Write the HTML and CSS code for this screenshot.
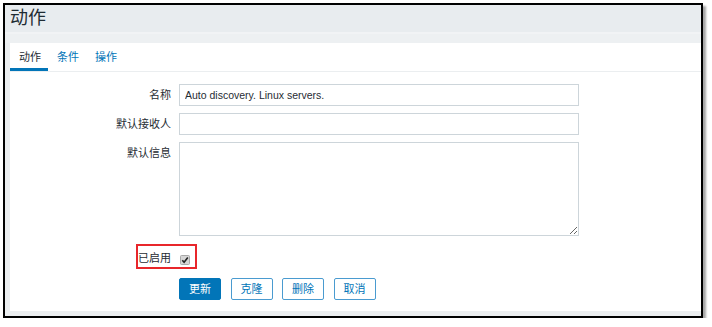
FILE: index.html
```html
<!DOCTYPE html>
<html lang="zh">
<head>
<meta charset="utf-8">
<title>动作</title>
<link rel="stylesheet" href="styles.css">
</head>
<body>
<div class="frame">
  <header class="header"><h1 class="title">动作</h1></header>
  <div class="strip"></div>
  <main class="panel">
    <ul class="tabs">
      <li class="tab active">动作</li>
      <li class="tab">条件</li>
      <li class="tab">操作</li>
    </ul>
    <form class="form">
      <div class="row">
        <label class="lbl">名称</label>
        <input class="field" type="text" value="Auto discovery. Linux servers.">
      </div>
      <div class="row">
        <label class="lbl">默认接收人</label>
        <input class="field" type="text" value="">
      </div>
      <div class="row">
        <label class="lbl">默认信息</label>
        <textarea class="area"></textarea>
      </div>
      <div class="row row-check">
        <span class="mark"></span>
        <label class="lbl">已启用</label>
        <span class="check">
          <svg width="10" height="10" viewBox="0 0 10 10">
            <rect x="0.5" y="0.5" width="9" height="9" rx="1" fill="#d6d6d6" stroke="#a9a9a9"/>
            <path d="M2.3 5.2 L4.1 7.2 L7.8 2.4" fill="none" stroke="#222" stroke-width="1.6"/>
          </svg>
        </span>
      </div>
      <div class="row row-btns">
        <span></span>
        <div class="btns">
          <button type="button" class="btn primary">更新</button>
          <button type="button" class="btn">克隆</button>
          <button type="button" class="btn">删除</button>
          <button type="button" class="btn">取消</button>
        </div>
      </div>
    </form>
  </main>
</div>
</body>
</html>
```
FILE: styles.css
```css
* { box-sizing: border-box; }
html, body { margin: 0; padding: 0; background: #ffffff; }
body {
  font-family: "Liberation Sans", "Noto Sans CJK SC", sans-serif;
  font-size: 11px;
  color: #1f2c33;
}
.frame {
  margin: 3px 0 0 3px;
  width: 700px;
  height: 315px;
  border: 2px solid #000;
  background: #ebeef0;
  box-shadow: 3px 3px 2px rgba(0,0,0,0.35);
  overflow: hidden;
}
.header {
  height: 27px;
  padding: 4px 0 0 5px;
  background: #e8ecef;
}
.title {
  margin: 0;
  font-size: 18px;
  line-height: 18px;
  font-weight: normal;
  color: #1f2c33;
}
.strip {
  height: 11px;
  background: #edf0f2;
  border-top: 2px solid #f1f3f5;
}
.panel {
  margin-left: 5px;
  height: 268px;
  background: #fff;
}
.tabs {
  display: flex;
  margin: 0;
  padding: 0;
  list-style: none;
  border-bottom: 1px solid #ebeef0;
}
.tab {
  padding: 7px 7px 4px 9px;
  line-height: 14px;
  font-size: 11px;
  color: #0275b8;
  border-bottom: 3px solid transparent;
}
.tab.active {
  color: #1f2c33;
  border-bottom-color: #0275b8;
}
.form {
  margin: 0;
  padding-top: 12px;
  display: flex;
  flex-direction: column;
  gap: 7px;
}
.row {
  position: relative;
  display: grid;
  grid-template-columns: 161px 400px;
  column-gap: 8px;
}
.lbl {
  text-align: right;
  line-height: 22px;
  font-size: 11px;
}
.field {
  height: 22px;
  border: 1px solid #cdd5da;
  padding: 0 5px;
  font-family: "Liberation Sans", sans-serif;
  font-size: 10.5px;
  color: #1f2c33;
  background: #fff;
  outline: none;
}
.area {
  height: 94px;
  border: 1px solid #cdd5da;
  padding: 3px 5px;
  background: #fff;
  font-family: "Liberation Sans", sans-serif;
  font-size: 10.5px;
  outline: none;
}
.row-check {
  margin-top: 4px;
  height: 22px;
}
.check {
  display: block;
  margin: 8px 0 0 1px;
  height: 10px;
  line-height: 0;
}
.mark {
  position: absolute;
  left: 126px;
  top: -3px;
  width: 61px;
  height: 25px;
  border: 2px solid #e8262b;
}
.row-btns {
  margin-top: 2px;
}
.btns {
  display: flex;
  gap: 9.5px;
}
.btn {
  width: 42px;
  height: 22px;
  padding: 0;
  border: 1px solid #4a9bd0;
  border-radius: 2px;
  background: #fff;
  color: #0275b8;
  font-family: "Liberation Sans", "Noto Sans CJK SC", sans-serif;
  font-size: 11px;
  line-height: 20px;
}
.btn.primary {
  background: #0275b8;
  border-color: #0275b8;
  color: #fff;
}
```
